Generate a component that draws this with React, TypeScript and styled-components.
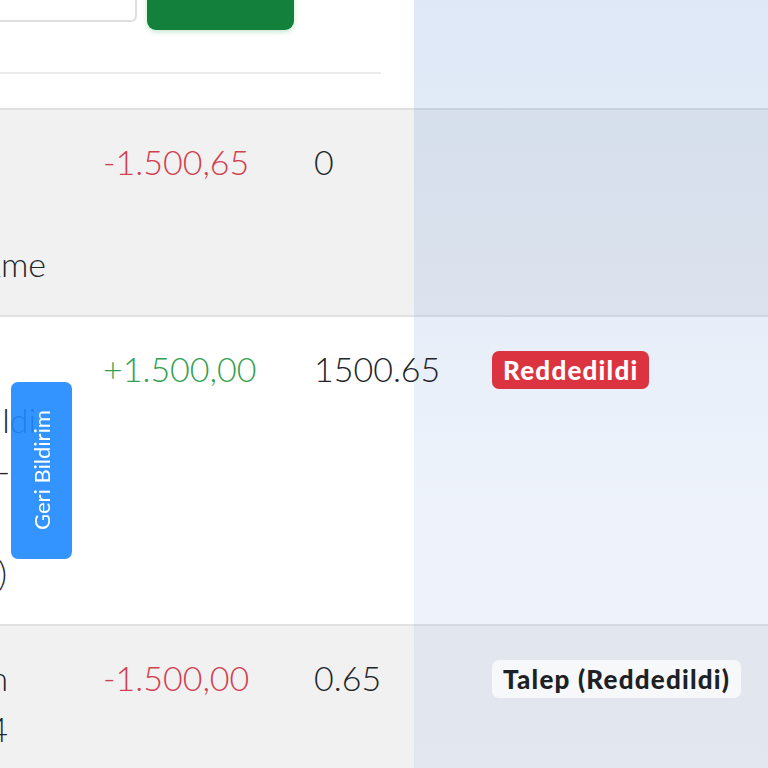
import styled, { createGlobalStyle } from "styled-components";

type Line = { text: string; inset: number };

type Row = {
  lines: Line[];
  amount: string;
  balance: string;
  status?: { label: string; kind: "danger" | "light" };
};

const ROWS: Row[] = [
  {
    lines: [
      { text: "Kullanıcı: Ahmet", inset: 140 },
      { text: "Açıklama:", inset: 140 },
      { text: "Para Çekme", inset: 57 },
    ],
    amount: "-1.500,65",
    balance: "0",
  },
  {
    lines: [
      { text: "Tarih:", inset: 140 },
      { text: "İade Edildi", inset: 67 },
      { text: "12.03.2024 -", inset: 93 },
      { text: "15:30 (UTC", inset: 140 },
      { text: "+03:00)", inset: 96 },
    ],
    amount: "+1.500,00",
    balance: "1500.65",
    status: { label: "Reddedildi", kind: "danger" },
  },
  {
    lines: [
      { text: "Para Çekim", inset: 95 },
      { text: "No: 2024", inset: 95 },
    ],
    amount: "-1.500,00",
    balance: "0.65",
    status: { label: "Talep (Reddedildi)", kind: "light" },
  },
];

const GlobalStyle = createGlobalStyle`
  html, body {
    margin: 0;
    padding: 0;
    background: #fff;
    overflow: hidden;
  }
  body {
    font-family: Lato, "Noto Sans", sans-serif;
    color: #212529;
  }
`;

const App = () => {
  return (
    <>
      <GlobalStyle />
      <Page>
        <Tint />
        <Scroller>
          <TopCard>
            <Toolbar>
              <SearchInput placeholder="" />
              <FilterButton />
            </Toolbar>
            <Divider />
          </TopCard>
          <Table>
            {ROWS.map((row, i) => (
              <TableRow key={i} $striped={i % 2 === 0}>
                <InfoCell>
                  {row.lines.map((line, j) => (
                    <InfoLine key={j} $inset={line.inset}>
                      {line.text}
                    </InfoLine>
                  ))}
                </InfoCell>
                <Cell>
                  <Amount $negative={row.amount.startsWith("-")}>
                    {row.amount}
                  </Amount>
                </Cell>
                <Cell>{row.balance}</Cell>
                <Cell>
                  {row.status && (
                    <Badge $kind={row.status.kind}>{row.status.label}</Badge>
                  )}
                </Cell>
              </TableRow>
            ))}
          </Table>
        </Scroller>
        <FeedbackTab>Geri Bildirim</FeedbackTab>
      </Page>
    </>
  );
};

export default App;

const Page = styled.div`
  position: relative;
  width: 768px;
  height: 768px;
  overflow: hidden;
  background: #fff;
`;

const Scroller = styled.div`
  display: flex;
  flex-direction: column;
  width: calc(100% + 285px);
  margin-left: -285px;
  margin-top: -40px;
`;

const TopCard = styled.div`
  width: 686px;
  box-sizing: border-box;
  padding-right: 20px;
  height: 148px;
`;

const Toolbar = styled.div`
  display: flex;
  align-items: flex-start;
  justify-content: flex-end;
  gap: 10px;
  padding-right: 87px;
`;

const SearchInput = styled.input`
  width: 300px;
  height: 62px;
  box-sizing: border-box;
  border: 2px solid #dedede;
  border-radius: 6px;
  background: #fff;
`;

const FilterButton = styled.button`
  width: 147px;
  height: 70px;
  border: none;
  border-radius: 9px;
  background: #13813c;
  box-shadow: 0 2px 5px rgba(25, 160, 70, 0.25);
`;

const Divider = styled.div`
  margin-top: 42px;
  height: 2px;
  background: #ebebeb;
`;

const Table = styled.div`
  display: flex;
  flex-direction: column;
  border-top: 2px solid #e0e0e0;
`;

const TableRow = styled.div<{ $striped: boolean }>`
  display: grid;
  grid-template-columns: 388px 211px 178px 1fr;
  padding: 26px 0;
  font-size: 34px;
  font-weight: 300;
  line-height: 51px;
  background: ${({ $striped }) => ($striped ? "#f1f1f1" : "#ffffff")};
  border-bottom: 2px solid #e2e2e2;
`;

const Cell = styled.div`
  position: relative;
  z-index: 1;
  white-space: nowrap;
  color: #212529;
`;

const InfoCell = styled.div`
  display: flex;
  flex-direction: column;
`;

const InfoLine = styled.div<{ $inset: number }>`
  text-align: right;
  white-space: nowrap;
  padding-right: ${({ $inset }) => $inset}px;
`;

const Amount = styled.span<{ $negative: boolean }>`
  color: ${({ $negative }) => ($negative ? "#d1404f" : "#34a150")};
`;

const Badge = styled.span<{ $kind: "danger" | "light" }>`
  display: inline-block;
  vertical-align: middle;
  margin-top: -7px;
  padding: 0 11px;
  height: 38px;
  line-height: 38px;
  border-radius: 7px;
  font-size: 26px;
  font-weight: 900;
  letter-spacing: 1.2px;
  background: ${({ $kind }) => ($kind === "danger" ? "#db3340" : "#f6f8fa")};
  color: ${({ $kind }) => ($kind === "danger" ? "#ffffff" : "#1d2125")};
`;

const Tint = styled.div`
  position: absolute;
  top: 0;
  bottom: 0;
  left: 414px;
  right: 0;
  z-index: 0;
  pointer-events: none;
  background: linear-gradient(
    180deg,
    rgba(120, 160, 220, 0.24) 0%,
    rgba(120, 160, 220, 0.2) 30%,
    rgba(120, 160, 220, 0.13) 65%,
    rgba(120, 160, 220, 0.12) 100%
  );
`;

const FeedbackTab = styled.div`
  position: fixed;
  z-index: 2;
  left: 11px;
  top: 382px;
  width: 61px;
  height: 177px;
  display: flex;
  align-items: center;
  justify-content: center;
  border-radius: 7px;
  background: rgba(30, 136, 255, 0.9);
  color: #fff;
  font-size: 22px;
  writing-mode: vertical-rl;
  transform: rotate(180deg);
`;
